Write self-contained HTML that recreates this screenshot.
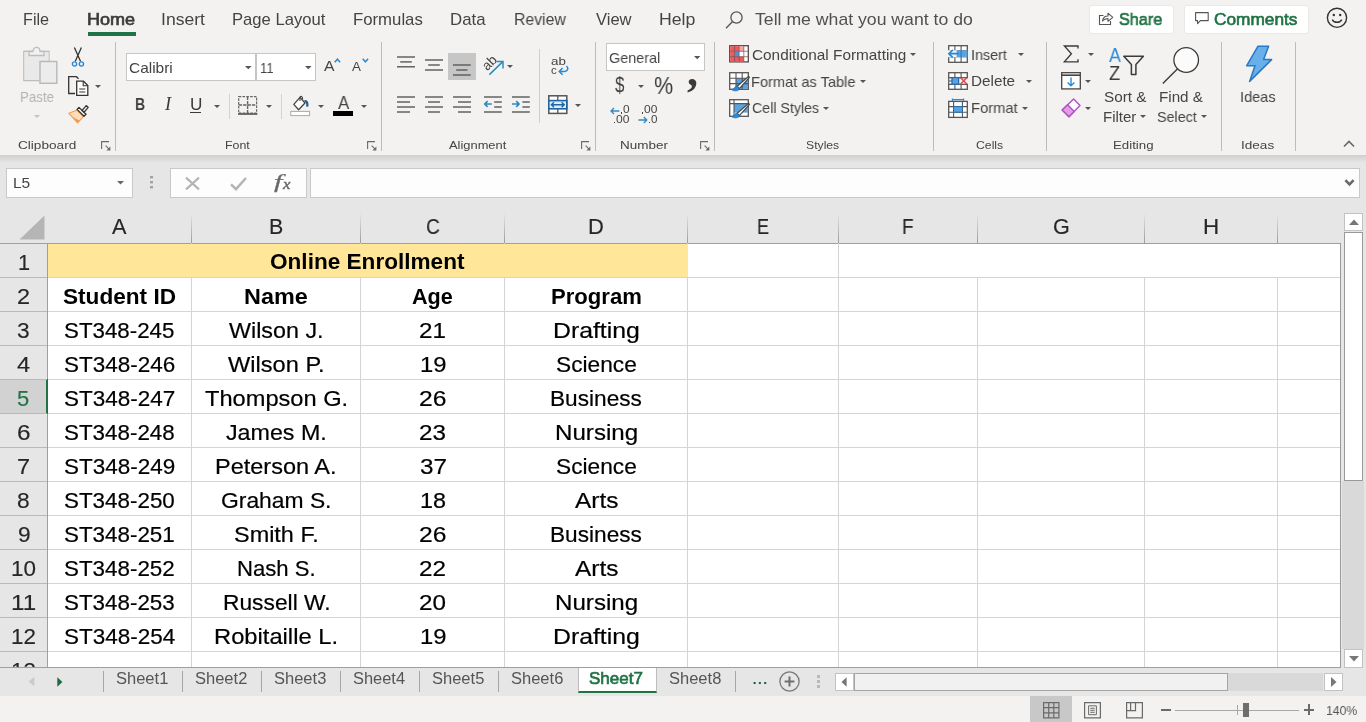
<!DOCTYPE html>
<html lang="en"><head><meta charset="utf-8"><title>Excel - Online Enrollment</title><style>
html,body{margin:0;padding:0}
body{width:1366px;height:722px;overflow:hidden;position:relative;background:#f3f2f1;font-family:"Liberation Sans",sans-serif}
div,svg,span.t{position:absolute;box-sizing:border-box}
span.t{white-space:nowrap;transform-origin:0 0;display:block;will-change:transform}
svg{overflow:visible}
</style></head>
<body>
<span class="t" style="left:23.23px;top:11.03px;font-size:16.2px;line-height:16.2px;color:#444;transform:scaleX(1.0008);">File</span>
<span class="t" style="left:87.19px;top:11.03px;font-size:16.2px;line-height:16.2px;color:#3a3a3a;-webkit-text-stroke:0.65px #3a3a3a;transform:scaleX(1.1140);">Home</span>
<div style="left:88px;top:32px;width:48px;height:4px;background:#217346"></div>
<span class="t" style="left:160.83px;top:11.03px;font-size:16.2px;line-height:16.2px;color:#444;transform:scaleX(1.0864);">Insert</span>
<span class="t" style="left:231.90px;top:11.03px;font-size:16.2px;line-height:16.2px;color:#444;transform:scaleX(1.0271);">Page Layout</span>
<span class="t" style="left:353.19px;top:11.03px;font-size:16.2px;line-height:16.2px;color:#444;transform:scaleX(1.0344);">Formulas</span>
<span class="t" style="left:449.89px;top:11.03px;font-size:16.2px;line-height:16.2px;color:#444;transform:scaleX(1.0376);">Data</span>
<span class="t" style="left:514.27px;top:11.03px;font-size:16.2px;line-height:16.2px;color:#444;transform:scaleX(0.9741);">Review</span>
<span class="t" style="left:596.20px;top:11.03px;font-size:16.2px;line-height:16.2px;color:#444;transform:scaleX(1.0223);">View</span>
<span class="t" style="left:658.82px;top:11.03px;font-size:16.2px;line-height:16.2px;color:#444;transform:scaleX(1.0925);">Help</span>
<span class="t" style="left:755.32px;top:11.03px;font-size:16.2px;line-height:16.2px;color:#505050;transform:scaleX(1.0905);">Tell me what you want to do</span>
<svg style="left:725px;top:10px" width="19" height="19" viewBox="0 0 19 19"><circle cx="11.5" cy="7.5" r="5.6" fill="none" stroke="#555" stroke-width="1.3"/><path d="M7.6 11.6L1 18.2" stroke="#555" stroke-width="1.4" fill="none"/></svg>
<div style="left:1089px;top:4.5px;width:84.5px;height:29px;background:#fff;border:1px solid #e9e8e6;border-radius:3px"></div>
<div style="left:1184px;top:4.5px;width:124.5px;height:29px;background:#fff;border:1px solid #e9e8e6;border-radius:3px"></div>
<span class="t" style="left:1118.69px;top:11.05px;font-size:17px;line-height:17px;color:#217346;-webkit-text-stroke:0.65px #217346;transform:scaleX(0.9537);">Share</span>
<span class="t" style="left:1213.89px;top:11.05px;font-size:17px;line-height:17px;color:#217346;-webkit-text-stroke:0.65px #217346;transform:scaleX(1.0154);">Comments</span>
<svg style="left:1098px;top:10px" width="16" height="16" viewBox="0 0 16 16"><path d="M5.5 5.5H1.5V14.5H12.5V11" fill="none" stroke="#555" stroke-width="1.1"/><path d="M4.5 11C5 7.5 7.5 6 10 6V3.2L14.8 7.3L10 11.3V8.6C8 8.6 6 9 4.5 11Z" fill="none" stroke="#555" stroke-width="1.1" stroke-linejoin="round"/></svg>
<svg style="left:1194.5px;top:12px" width="14" height="13" viewBox="0 0 14 13"><path d="M0.6 0.6H13.2V8.6H5.4L2.6 11.6V8.6H0.6Z" fill="none" stroke="#555" stroke-width="1.1" stroke-linejoin="round"/></svg>
<svg style="left:1326px;top:7px" width="22" height="22" viewBox="0 0 22 22"><circle cx="11" cy="10.8" r="9.6" fill="none" stroke="#333" stroke-width="1.4"/><circle cx="7.8" cy="8" r="1.2" fill="#333"/><circle cx="14.2" cy="8" r="1.2" fill="#333"/><path d="M6.2 12.6C8 16.2 14 16.2 15.8 12.6" fill="none" stroke="#333" stroke-width="1.4"/></svg>
<div style="left:115px;top:42px;width:1px;height:109px;background:#bebcba"></div>
<div style="left:381px;top:42px;width:1px;height:109px;background:#bebcba"></div>
<div style="left:595px;top:42px;width:1px;height:109px;background:#bebcba"></div>
<div style="left:714px;top:42px;width:1px;height:109px;background:#bebcba"></div>
<div style="left:933px;top:42px;width:1px;height:109px;background:#bebcba"></div>
<div style="left:1046px;top:42px;width:1px;height:109px;background:#bebcba"></div>
<div style="left:1221px;top:42px;width:1px;height:109px;background:#bebcba"></div>
<div style="left:1295px;top:42px;width:1px;height:109px;background:#bebcba"></div>
<div style="left:539px;top:49px;width:1px;height:74px;background:#d0cecc"></div>
<div style="left:229px;top:93.5px;width:1px;height:25.0px;background:#d4d2d0"></div>
<div style="left:281px;top:93.5px;width:1px;height:25.0px;background:#d4d2d0"></div>
<svg style="left:1343px;top:140px" width="12" height="8" viewBox="0 0 12 8"><path d="M1 6.5L6 1.5L11 6.5" fill="none" stroke="#666" stroke-width="1.6"/></svg>
<span class="t" style="left:17.87px;top:140.27px;font-size:11.8px;line-height:11.8px;color:#444;transform:scaleX(1.1534);">Clipboard</span>
<span class="t" style="left:225.30px;top:140.27px;font-size:11.8px;line-height:11.8px;color:#444;transform:scaleX(1.0495);">Font</span>
<span class="t" style="left:449.30px;top:140.27px;font-size:11.8px;line-height:11.8px;color:#444;transform:scaleX(1.0917);">Alignment</span>
<span class="t" style="left:620.21px;top:140.27px;font-size:11.8px;line-height:11.8px;color:#444;transform:scaleX(1.1435);">Number</span>
<span class="t" style="left:806.48px;top:140.27px;font-size:11.8px;line-height:11.8px;color:#444;transform:scaleX(1.0342);">Styles</span>
<span class="t" style="left:975.73px;top:140.27px;font-size:11.8px;line-height:11.8px;color:#444;transform:scaleX(1.0365);">Cells</span>
<span class="t" style="left:1113.23px;top:140.27px;font-size:11.8px;line-height:11.8px;color:#444;transform:scaleX(1.1244);">Editing</span>
<span class="t" style="left:1241.29px;top:140.27px;font-size:11.8px;line-height:11.8px;color:#444;transform:scaleX(1.1490);">Ideas</span>
<svg style="left:100.5px;top:140.6px" width="10" height="10" viewBox="0 0 10 10"><path d="M0.6 8V0.6H8" fill="none" stroke="#6a6a6a" stroke-width="1.1"/><path d="M4.6 4.6L8.4 8.4" fill="none" stroke="#6a6a6a" stroke-width="1.1"/><path d="M9.4 5.4V9.4H5.4Z" fill="#6a6a6a"/></svg>
<svg style="left:366.5px;top:140.6px" width="10" height="10" viewBox="0 0 10 10"><path d="M0.6 8V0.6H8" fill="none" stroke="#6a6a6a" stroke-width="1.1"/><path d="M4.6 4.6L8.4 8.4" fill="none" stroke="#6a6a6a" stroke-width="1.1"/><path d="M9.4 5.4V9.4H5.4Z" fill="#6a6a6a"/></svg>
<svg style="left:581px;top:140.6px" width="10" height="10" viewBox="0 0 10 10"><path d="M0.6 8V0.6H8" fill="none" stroke="#6a6a6a" stroke-width="1.1"/><path d="M4.6 4.6L8.4 8.4" fill="none" stroke="#6a6a6a" stroke-width="1.1"/><path d="M9.4 5.4V9.4H5.4Z" fill="#6a6a6a"/></svg>
<svg style="left:699.5px;top:140.6px" width="10" height="10" viewBox="0 0 10 10"><path d="M0.6 8V0.6H8" fill="none" stroke="#6a6a6a" stroke-width="1.1"/><path d="M4.6 4.6L8.4 8.4" fill="none" stroke="#6a6a6a" stroke-width="1.1"/><path d="M9.4 5.4V9.4H5.4Z" fill="#6a6a6a"/></svg>
<div style="left:0px;top:155px;width:1366px;height:541.5px;background:#e6e6e6"></div>
<div style="left:0px;top:155px;width:1366px;height:8px;background:linear-gradient(#d0cfce,#dad9d9 40%,#e6e6e6)"></div>
<svg style="left:23px;top:46px" width="35" height="39" viewBox="0 0 35 39"><path d="M8.5 5.5H0.8V34.5H16.5" fill="#e9e9e9" stroke="#bdbdbd" stroke-width="1.3"/><path d="M0.8 5.5H26V16" fill="#e9e9e9" stroke="#bdbdbd" stroke-width="1.3"/><rect x="1.5" y="6" width="24" height="28" fill="#e9e9e9"/><path d="M6 9.5V5.5H10C10 0 17 0 17 5.5H21V9.5Z" fill="#f3f2f1" stroke="#bdbdbd" stroke-width="1.3"/><rect x="17" y="15.5" width="16.8" height="21.8" fill="#ececec" stroke="#b7b7b7" stroke-width="1.4"/></svg>
<span class="t" style="left:20.16px;top:89.05px;font-size:15px;line-height:15px;color:#b3b3b3;transform:scaleX(0.8858);">Paste</span>
<svg style="left:34.0px;top:114.8px" width="6" height="3" viewBox="0 0 6 3"><path d="M0 0H6L3.0 3Z" fill="#c2c2c2"/></svg>
<svg style="left:71px;top:47px" width="14" height="21" viewBox="0 0 14 21"><path d="M3.4 0.4L9.6 14.6M10.4 0.4L4.2 14.6" stroke="#333" stroke-width="1.3" fill="none"/><circle cx="3.5" cy="17" r="2.1" fill="none" stroke="#2b88d8" stroke-width="1.4"/><circle cx="10.4" cy="17" r="2.1" fill="none" stroke="#2b88d8" stroke-width="1.4"/></svg>
<svg style="left:68px;top:76px" width="21" height="20" viewBox="0 0 21 20"><path d="M7 17.5H0.7V0.7H8.5L10.5 2.7" fill="none" stroke="#333" stroke-width="1.3"/><path d="M8.7 5.2H15.5L19.8 9.5V19.3H8.7Z" fill="#fff" stroke="#333" stroke-width="1.3"/><path d="M15.2 5.4V9.8H19.6" fill="none" stroke="#333" stroke-width="1.1"/><path d="M11.2 13H17.3M11.2 16H17.3" stroke="#333" stroke-width="1.2"/></svg>
<svg style="left:95.2px;top:85.2px" width="6" height="3" viewBox="0 0 6 3"><path d="M0 0H6L3.0 3Z" fill="#555"/></svg>
<svg style="left:68px;top:104px" width="21" height="20" viewBox="0 0 21 20"><path d="M0.9 9.3L8.6 6.2L15.4 12.6L9.6 18.8Z" fill="#fbdcbc" stroke="#f0a250" stroke-width="1.1" stroke-linejoin="round"/><path d="M0.9 9.3L4.4 12.9L11.6 16.6L9.6 18.8Z" fill="#f29a45"/><path d="M9 5.4L11 3.4L18 10.2L16 12.2Z" fill="#f3f2f1" stroke="#333" stroke-width="1.3" stroke-linejoin="round"/><path d="M14.2 6.4L18.2 1.6L20.2 3.4L16.2 8.2Z" fill="#f3f2f1" stroke="#333" stroke-width="1.3" stroke-linejoin="round"/></svg>
<div style="left:126px;top:53px;width:130px;height:28px;background:#fff;border:1px solid #c6c6c6"></div>
<div style="left:255.5px;top:53px;width:60.5px;height:28px;background:#fff;border:1px solid #c6c6c6"></div>
<span class="t" style="left:128.88px;top:59.85px;font-size:15px;line-height:15px;color:#444;transform:scaleX(1.0290);">Calibri</span>
<svg style="left:244.7px;top:66.05px" width="6.6" height="3.3" viewBox="0 0 6.6 3.3"><path d="M0 0H6.6L3.3 3.3Z" fill="#555"/></svg>
<span class="t" style="left:260.18px;top:59.85px;font-size:15px;line-height:15px;color:#444;transform:scaleX(0.8698);">11</span>
<svg style="left:304.5px;top:66.05px" width="6.6" height="3.3" viewBox="0 0 6.6 3.3"><path d="M0 0H6.6L3.3 3.3Z" fill="#555"/></svg>
<span class="t" style="left:324.20px;top:57.88px;font-size:15.2px;line-height:15.2px;color:#444;transform:scaleX(1.0379);">A</span>
<svg style="left:334px;top:58px" width="7" height="5" viewBox="0 0 7 5"><path d="M0.7 4.2L3.4 1.2L6.1 4.2" fill="none" stroke="#2b88d8" stroke-width="1.5"/></svg>
<span class="t" style="left:352.30px;top:59.75px;font-size:13px;line-height:13px;color:#444;transform:scaleX(1.0304);">A</span>
<svg style="left:361.5px;top:58.3px" width="7" height="5" viewBox="0 0 7 5"><path d="M0.7 0.8L3.4 3.8L6.1 0.8" fill="none" stroke="#2b88d8" stroke-width="1.5"/></svg>
<span class="t" style="left:134.92px;top:96.15px;font-size:17px;line-height:17px;color:#3b3b3b;font-weight:700;transform:scaleX(0.8282);">B</span>
<span class="t" style="left:164.69px;top:95.30px;font-size:18px;line-height:18px;color:#3b3b3b;font-style:italic;font-family:'Liberation Serif', serif;transform:scaleX(1.0240);">I</span>
<span class="t" style="left:189.53px;top:96.60px;font-size:16px;line-height:16px;color:#3b3b3b;transform:scaleX(1.0737);">U</span>
<div style="left:190.2px;top:112.1px;width:11px;height:1.3px;background:#3b3b3b"></div>
<svg style="left:214.2px;top:104.9px" width="6" height="3" viewBox="0 0 6 3"><path d="M0 0H6L3.0 3Z" fill="#555"/></svg>
<svg style="left:238px;top:96px" width="20" height="19" viewBox="0 0 20 19"><path d="M0.7 0.7H18.6V17.2H0.7Z" fill="none" stroke="#666" stroke-width="1.2" stroke-dasharray="2.6 1.2"/><path d="M9.6 0.7V17.2M0.7 9H18.6" fill="none" stroke="#666" stroke-width="1.4" stroke-dasharray="3.4 1"/><path d="M0 18H19.4" stroke="#5a5a5a" stroke-width="1.7"/></svg>
<svg style="left:266.0px;top:104.9px" width="6" height="3" viewBox="0 0 6 3"><path d="M0 0H6L3.0 3Z" fill="#555"/></svg>
<svg style="left:290px;top:96px" width="21" height="20" viewBox="0 0 21 20"><path d="M3.8 8.4L10 1.4L15 7L8.6 13.8Z" fill="#fff" stroke="#444" stroke-width="1.3" stroke-linejoin="round"/><path d="M10 5V1.6C10.2 -0.4 13 0 12.6 3.4" fill="none" stroke="#444" stroke-width="1.1"/><path d="M14.6 5.2C16.8 4.6 17.8 7 17.2 10.6" fill="none" stroke="#24648f" stroke-width="2.3"/><rect x="0.8" y="15.4" width="18.8" height="4.2" fill="#fff" stroke="#a9a9a9" stroke-width="1"/></svg>
<svg style="left:317.8px;top:104.9px" width="6" height="3" viewBox="0 0 6 3"><path d="M0 0H6L3.0 3Z" fill="#555"/></svg>
<span class="t" style="left:337.60px;top:94.08px;font-size:18.5px;line-height:18.5px;color:#444;transform:scaleX(0.9172);">A</span>
<div style="left:333px;top:111.2px;width:20.2px;height:4.7px;background:#000"></div>
<svg style="left:361.2px;top:104.9px" width="6" height="3" viewBox="0 0 6 3"><path d="M0 0H6L3.0 3Z" fill="#555"/></svg>
<div style="left:448px;top:53px;width:27.7px;height:26.6px;background:#c6c6c6"></div>
<svg style="left:397px;top:55.7px" width="20" height="11.799999999999997" viewBox="0 0 20 11.799999999999997"><rect x="0" y="0.30" width="18" height="1.4" fill="#595959"/><rect x="3.2" y="5.20" width="11.600000000000001" height="1.4" fill="#595959"/><rect x="0" y="10.10" width="18" height="1.4" fill="#595959"/></svg>
<svg style="left:425.2px;top:59.3px" width="20" height="12.0" viewBox="0 0 20 12.0"><rect x="0" y="0.30" width="18" height="1.4" fill="#595959"/><rect x="3.2" y="5.30" width="11.600000000000001" height="1.4" fill="#595959"/><rect x="0" y="10.30" width="18" height="1.4" fill="#595959"/></svg>
<svg style="left:453.2px;top:64.2px" width="20" height="12.0" viewBox="0 0 20 12.0"><rect x="0" y="0.30" width="17.7" height="1.4" fill="#595959"/><rect x="3.2" y="5.30" width="11.3" height="1.4" fill="#595959"/><rect x="0" y="10.30" width="17.7" height="1.4" fill="#595959"/></svg>
<svg style="left:397px;top:95.9px" width="20" height="17.0" viewBox="0 0 20 17.0"><rect x="0" y="0.30" width="18" height="1.4" fill="#595959"/><rect x="0" y="5.30" width="13" height="1.4" fill="#595959"/><rect x="0" y="10.30" width="18" height="1.4" fill="#595959"/><rect x="0" y="15.30" width="13" height="1.4" fill="#595959"/></svg>
<svg style="left:425.2px;top:95.9px" width="20" height="17.0" viewBox="0 0 20 17.0"><rect x="0" y="0.30" width="18" height="1.4" fill="#595959"/><rect x="3" y="5.30" width="12" height="1.4" fill="#595959"/><rect x="0" y="10.30" width="18" height="1.4" fill="#595959"/><rect x="3" y="15.30" width="12" height="1.4" fill="#595959"/></svg>
<svg style="left:453px;top:95.9px" width="20" height="17.0" viewBox="0 0 20 17.0"><rect x="0" y="0.30" width="18" height="1.4" fill="#595959"/><rect x="5" y="5.30" width="13" height="1.4" fill="#595959"/><rect x="0" y="10.30" width="18" height="1.4" fill="#595959"/><rect x="5" y="15.30" width="13" height="1.4" fill="#595959"/></svg>
<svg style="left:484px;top:95.9px" width="20" height="17.0" viewBox="0 0 20 17.0"><rect x="0" y="0.30" width="17.8" height="1.4" fill="#595959"/><rect x="10.2" y="5.30" width="7.600000000000001" height="1.4" fill="#595959"/><rect x="10.2" y="10.30" width="7.600000000000001" height="1.4" fill="#595959"/><rect x="0" y="15.30" width="17.8" height="1.4" fill="#595959"/></svg>
<svg style="left:512.2px;top:95.9px" width="20" height="17.0" viewBox="0 0 20 17.0"><rect x="0" y="0.30" width="17.8" height="1.4" fill="#595959"/><rect x="10.4" y="5.30" width="7.4" height="1.4" fill="#595959"/><rect x="10.4" y="10.30" width="7.4" height="1.4" fill="#595959"/><rect x="0" y="15.30" width="17.8" height="1.4" fill="#595959"/></svg>
<svg style="left:484px;top:100.4px" width="8" height="8" viewBox="0 0 8 8"><path d="M7.8 4H0.8M3.6 1.2L0.8 4L3.6 6.8" fill="none" stroke="#2e8bc0" stroke-width="1.7"/></svg>
<svg style="left:512.2px;top:100.4px" width="8" height="8" viewBox="0 0 8 8"><path d="M0 4H7M4.2 1.2L7 4L4.2 6.8" fill="none" stroke="#2e8bc0" stroke-width="1.7"/></svg>
<svg style="left:480px;top:54px" width="26" height="23" viewBox="0 0 26 23"><text x="9.6" y="13.2" font-size="13.5" font-family="Liberation Sans, sans-serif" fill="#444" text-anchor="middle" transform="rotate(-45 9.6 9)">ab</text><path d="M9.4 20.6L22.8 7.6M16.2 7.4H23V14.4" fill="none" stroke="#2e8bc0" stroke-width="1.5"/></svg>
<svg style="left:507.2px;top:65.0px" width="6" height="3" viewBox="0 0 6 3"><path d="M0 0H6L3.0 3Z" fill="#555"/></svg>
<span class="t" style="left:550.85px;top:55.65px;font-size:11px;line-height:11px;color:#444;transform:scaleX(1.2140);">ab</span>
<span class="t" style="left:551.13px;top:64.85px;font-size:11px;line-height:11px;color:#444;transform:scaleX(1.0417);">c</span>
<svg style="left:557.5px;top:65px" width="11" height="11" viewBox="0 0 11 11"><path d="M8.6 1C10.6 3.4 10 6.4 6.4 6.4H1.4M4.6 3L1.2 6.4L4.6 9.8" fill="none" stroke="#2b88d8" stroke-width="1.5"/></svg>
<svg style="left:548px;top:95px" width="20" height="19.5" viewBox="0 0 20 19.5"><rect x="0.8" y="0.8" width="18" height="17.6" fill="#fff" stroke="#555" stroke-width="1.5"/><path d="M9.8 0.8V5.4M9.8 14V18.4" stroke="#555" stroke-width="1.3"/><rect x="0.8" y="5.6" width="18" height="8.2" fill="#d9ecfa" stroke="#1f64a0" stroke-width="1.6"/><path d="M3.4 9.7H16.2M6 7.2L3.4 9.7L6 12.2M13.6 7.2L16.2 9.7L13.6 12.2" fill="none" stroke="#1f64a0" stroke-width="1.4"/></svg>
<svg style="left:574.8px;top:104.1px" width="6" height="3" viewBox="0 0 6 3"><path d="M0 0H6L3.0 3Z" fill="#555"/></svg>
<div style="left:606.2px;top:43.3px;width:98.5px;height:27.3px;background:#fff;border:1px solid #c6c6c6"></div>
<span class="t" style="left:608.93px;top:49.95px;font-size:15px;line-height:15px;color:#444;transform:scaleX(0.9599);">General</span>
<svg style="left:693.9px;top:56.1px" width="6.4" height="3.2" viewBox="0 0 6.4 3.2"><path d="M0 0H6.4L3.2 3.2Z" fill="#555"/></svg>
<span class="t" style="left:615.00px;top:74.28px;font-size:22.5px;line-height:22.5px;color:#3b3b3b;transform:scaleX(0.7558);">$</span>
<svg style="left:638.0px;top:84.9px" width="6" height="3" viewBox="0 0 6 3"><path d="M0 0H6L3.0 3Z" fill="#555"/></svg>
<span class="t" style="left:653.53px;top:74.00px;font-size:24px;line-height:24px;color:#3b3b3b;transform:scaleX(0.8956);">%</span>
<span class="t" style="left:686.80px;top:49.80px;font-size:44px;line-height:44px;color:#3b3b3b;font-weight:700;font-family:'Liberation Serif', serif;transform:scaleX(0.9974);">,</span>
<svg style="left:610px;top:106.5px" width="10" height="8" viewBox="0 0 10 8"><path d="M9.4 4H1M4 1L1 4L4 7" fill="none" stroke="#2e8bc0" stroke-width="1.3"/></svg>
<span class="t" style="left:622.89px;top:103.82px;font-size:11.5px;line-height:11.5px;color:#444;transform:scaleX(1.0270);">0</span>
<div style="left:620.6px;top:112.3px;width:1.3px;height:1.3px;background:#444"></div>
<span class="t" style="left:616.08px;top:113.52px;font-size:11.5px;line-height:11.5px;color:#444;transform:scaleX(1.0464);">00</span>
<div style="left:613.6px;top:122px;width:1.3px;height:1.3px;background:#444"></div>
<span class="t" style="left:644.18px;top:103.82px;font-size:11.5px;line-height:11.5px;color:#444;transform:scaleX(1.0380);">00</span>
<div style="left:641.6px;top:112.3px;width:1.3px;height:1.3px;background:#444"></div>
<svg style="left:638.2px;top:116px" width="10" height="8" viewBox="0 0 10 8"><path d="M0.4 4H8.8M5.8 1L8.8 4L5.8 7" fill="none" stroke="#2e8bc0" stroke-width="1.3"/></svg>
<span class="t" style="left:651.00px;top:113.52px;font-size:11.5px;line-height:11.5px;color:#444;transform:scaleX(1.0090);">0</span>
<div style="left:648.8px;top:122px;width:1.3px;height:1.3px;background:#444"></div>
<svg style="left:729px;top:45px" width="20" height="18" viewBox="0 0 20 18"><rect x="0.7" y="0.7" width="18.6" height="16.2" fill="#fff" stroke="#5a4a4a" stroke-width="1.3"/><rect x="1.2" y="1.2" width="9" height="5.2" fill="#f0585c"/><rect x="10.2" y="1.2" width="4.6" height="5.2" fill="#f7a6a8"/><rect x="1.2" y="6.4" width="4.4" height="5.4" fill="#f0585c"/><rect x="5.6" y="6.4" width="4.4" height="5.4" fill="#4f93d2"/><rect x="1.2" y="11.6" width="13.6" height="5" fill="#f0585c"/><path d="M5.6 1V16.6M10.2 1V16.6M14.8 1V16.6M1 6.3H19M1 11.7H19" stroke="#6e4a4a" stroke-width="0.9" opacity="0.75"/></svg>
<span class="t" style="left:751.88px;top:47.05px;font-size:15px;line-height:15px;color:#444;transform:scaleX(1.0230);">Conditional Formatting</span>
<svg style="left:909.9px;top:53.1px" width="6" height="3" viewBox="0 0 6 3"><path d="M0 0H6L3.0 3Z" fill="#555"/></svg>
<svg style="left:729px;top:72px" width="21" height="20" viewBox="0 0 21 20"><rect x="0.7" y="0.7" width="18.6" height="16.6" fill="#fff" stroke="#555" stroke-width="1.3"/><rect x="7" y="6.2" width="12" height="10.6" fill="#5ba3e0"/><path d="M7 1V17M13.2 1V17M1 6.2H19M1 11.6H19" stroke="#555" stroke-width="1.1"/><path d="M19.6 4.4L8.2 14.2L10.4 16.6L20.4 5.4Z" fill="#fff" stroke="#444" stroke-width="1.2" stroke-linejoin="round"/><path d="M8.2 14.2C5.6 13.8 5.4 17.4 2.6 17.6C5.2 19.4 9.8 19.4 10.4 16.6Z" fill="#2b88d8" stroke="#1f6fb5" stroke-width="0.8"/></svg>
<span class="t" style="left:751.46px;top:73.85px;font-size:15px;line-height:15px;color:#444;transform:scaleX(0.9739);">Format as Table</span>
<svg style="left:860.0px;top:79.9px" width="6" height="3" viewBox="0 0 6 3"><path d="M0 0H6L3.0 3Z" fill="#555"/></svg>
<svg style="left:729px;top:99px" width="21" height="20" viewBox="0 0 21 20"><rect x="0.7" y="0.7" width="18.6" height="16.6" fill="#fff" stroke="#555" stroke-width="1.3"/><rect x="5" y="4.6" width="14" height="9" fill="#5ba3e0"/><path d="M5 1V17M1 4.6H19" stroke="#555" stroke-width="1.1"/><path d="M19.6 4.4L8.2 14.2L10.4 16.6L20.4 5.4Z" fill="#fff" stroke="#444" stroke-width="1.2" stroke-linejoin="round"/><path d="M8.2 14.2C5.6 13.8 5.4 17.4 2.6 17.6C5.2 19.4 9.8 19.4 10.4 16.6Z" fill="#2b88d8" stroke="#1f6fb5" stroke-width="0.8"/></svg>
<span class="t" style="left:751.93px;top:100.45px;font-size:15px;line-height:15px;color:#444;transform:scaleX(0.9472);">Cell Styles</span>
<svg style="left:822.9px;top:106.7px" width="6" height="3" viewBox="0 0 6 3"><path d="M0 0H6L3.0 3Z" fill="#555"/></svg>
<svg style="left:948px;top:45px" width="20" height="18" viewBox="0 0 20 18"><rect x="0.7" y="0.7" width="18.6" height="16.6" fill="#fff" stroke="#555" stroke-width="1.3"/><path d="M0.7 5.8H19.3M0.7 11.6H19.3M6.9 0.7V17.3M13.1 0.7V17.3" stroke="#555" stroke-width="1.1"/><rect x="0" y="5.2" width="9" height="7" fill="#f3f2f1"/><rect x="8.6" y="5.2" width="10.8" height="7" fill="#5ba3e0"/><path d="M13.1 5.2V12.2" stroke="#2a6ca8" stroke-width="0.9"/><path d="M11 8.7H1M4.8 4.8L0.9 8.7L4.8 12.6" fill="none" stroke="#2b88d8" stroke-width="1.7"/></svg>
<span class="t" style="left:970.88px;top:46.65px;font-size:15px;line-height:15px;color:#444;transform:scaleX(0.9562);">Insert</span>
<svg style="left:1018.2px;top:53.0px" width="6" height="3" viewBox="0 0 6 3"><path d="M0 0H6L3.0 3Z" fill="#555"/></svg>
<svg style="left:948px;top:72px" width="20" height="18" viewBox="0 0 20 18"><rect x="0.7" y="0.7" width="18.6" height="5" fill="#fff" stroke="#555" stroke-width="1.3"/><rect x="0.7" y="12.3" width="18.6" height="5" fill="#fff" stroke="#555" stroke-width="1.3"/><path d="M6.9 0.7V5.7M13.1 0.7V5.7M6.9 12.3V17.3M13.1 12.3V17.3M0.7 5.7V12.3" stroke="#555" stroke-width="1.1"/><path d="M0.7 9H4" stroke="#2a6ca8" stroke-width="1.1"/><rect x="4" y="5.6" width="6.6" height="6.6" fill="#5ba3e0" stroke="#2a6ca8" stroke-width="1.3"/><path d="M12.6 5.8L18.8 12M18.8 5.8L12.6 12" stroke="#e8484c" stroke-width="1.5"/></svg>
<span class="t" style="left:970.81px;top:73.45px;font-size:15px;line-height:15px;color:#444;transform:scaleX(1.0173);">Delete</span>
<svg style="left:1026.1px;top:79.8px" width="6" height="3" viewBox="0 0 6 3"><path d="M0 0H6L3.0 3Z" fill="#555"/></svg>
<svg style="left:948px;top:98px" width="20" height="20" viewBox="0 0 20 20"><rect x="0.7" y="3.4" width="18.6" height="16" fill="#fff" stroke="#555" stroke-width="1.3"/><path d="M0.7 8.6H19.3M0.7 14.2H19.3M5.6 3.4V19.4M14.4 3.4V19.4" stroke="#555" stroke-width="1.1"/><rect x="5.6" y="8.6" width="8.8" height="5.6" fill="#5ba3e0" stroke="#2a6ca8" stroke-width="1"/><path d="M4.4 0.4V3M15.6 0.4V3M4.4 1.6H15.6" stroke="#2b88d8" stroke-width="1.1" fill="none"/></svg>
<span class="t" style="left:970.85px;top:100.25px;font-size:15px;line-height:15px;color:#444;transform:scaleX(0.9831);">Format</span>
<svg style="left:1022.0999999999999px;top:106.6px" width="6" height="3" viewBox="0 0 6 3"><path d="M0 0H6L3.0 3Z" fill="#555"/></svg>
<svg style="left:1063px;top:45px" width="17" height="18" viewBox="0 0 17 18"><path d="M15 3.6V1H1.4L8.4 8.8L1.4 16.8H15V14.2" fill="none" stroke="#3b3b3b" stroke-width="1.35"/></svg>
<svg style="left:1088.0px;top:53.0px" width="6" height="3" viewBox="0 0 6 3"><path d="M0 0H6L3.0 3Z" fill="#555"/></svg>
<svg style="left:1061px;top:72px" width="20" height="18" viewBox="0 0 20 18"><rect x="0.7" y="0.7" width="18.6" height="16.2" fill="#fff" stroke="#444" stroke-width="1.3"/><path d="M0.7 3.2H19.3" stroke="#444" stroke-width="1.6"/><path d="M10 5.6V13.6M6.6 10.4L10 13.8L13.4 10.4" fill="none" stroke="#2b88d8" stroke-width="1.4"/></svg>
<svg style="left:1085.0px;top:79.8px" width="6" height="3" viewBox="0 0 6 3"><path d="M0 0H6L3.0 3Z" fill="#555"/></svg>
<svg style="left:1061px;top:98px" width="20" height="20" viewBox="0 0 20 20"><path d="M12.6 1L19 7.6L8 18.8L1.2 12Z" fill="#fff" stroke="#b14fc5" stroke-width="1.4" stroke-linejoin="round"/><path d="M6.6 6.8L13.2 13.4L8 18.8L1.2 12Z" fill="#e59be8" stroke="#b14fc5" stroke-width="1.4" stroke-linejoin="round"/></svg>
<svg style="left:1085.0px;top:106.6px" width="6" height="3" viewBox="0 0 6 3"><path d="M0 0H6L3.0 3Z" fill="#555"/></svg>
<span class="t" style="left:1108.60px;top:44.78px;font-size:20.5px;line-height:20.5px;color:#2e8bd8;transform:scaleX(0.8712);">A</span>
<span class="t" style="left:1108.83px;top:62.60px;font-size:20px;line-height:20px;color:#3b3b3b;transform:scaleX(0.9156);">Z</span>
<svg style="left:1123px;top:54.6px" width="22" height="22" viewBox="0 0 22 22"><path d="M0.8 1.2H20.4L12.9 9.6V19.6H8.4V9.6Z" fill="none" stroke="#3b3b3b" stroke-width="1.5" stroke-linejoin="round"/></svg>
<span class="t" style="left:1103.92px;top:88.85px;font-size:15px;line-height:15px;color:#444;transform:scaleX(1.0182);">Sort &amp;</span>
<span class="t" style="left:1103.24px;top:108.85px;font-size:15px;line-height:15px;color:#444;transform:scaleX(0.9910);">Filter</span>
<svg style="left:1140.2px;top:114.9px" width="6" height="3" viewBox="0 0 6 3"><path d="M0 0H6L3.0 3Z" fill="#555"/></svg>
<svg style="left:1162.4px;top:46.6px" width="38" height="38" viewBox="0 0 38 38"><circle cx="24.2" cy="13" r="12.3" fill="#fbfbfb" stroke="#3b3b3b" stroke-width="1.3"/><path d="M15.6 21.8L0.8 36.4" stroke="#3b3b3b" stroke-width="1.4"/></svg>
<span class="t" style="left:1159.21px;top:88.85px;font-size:15px;line-height:15px;color:#444;transform:scaleX(1.0138);">Find &amp;</span>
<span class="t" style="left:1156.95px;top:108.85px;font-size:15px;line-height:15px;color:#444;transform:scaleX(0.9546);">Select</span>
<svg style="left:1201.4px;top:114.9px" width="6" height="3" viewBox="0 0 6 3"><path d="M0 0H6L3.0 3Z" fill="#555"/></svg>
<svg style="left:1245px;top:45px" width="29" height="38" viewBox="0 0 29 38"><path d="M13 1.2H23.6L18.6 14.6H26.6L4.6 36.4L10 20.8H1.6Z" fill="#69afe9" stroke="#2878c8" stroke-width="1.5" stroke-linejoin="round"/></svg>
<span class="t" style="left:1240.46px;top:88.95px;font-size:15px;line-height:15px;color:#444;transform:scaleX(0.9699);">Ideas</span>
<div style="left:6px;top:168px;width:126.5px;height:29.5px;background:#fdfdfd;border:1px solid #c9c9c9"></div>
<span class="t" style="left:13.02px;top:175.42px;font-size:15.5px;line-height:15.5px;color:#444;transform:scaleX(0.9739);">L5</span>
<svg style="left:117.0px;top:180.95px" width="7" height="3.5" viewBox="0 0 7 3.5"><path d="M0 0H7L3.5 3.5Z" fill="#666"/></svg>
<svg style="left:150.2px;top:176.4px" width="3" height="2.5" viewBox="0 0 3 2.5"><rect width="3" height="2.4" fill="#a3a3a3"/></svg>
<svg style="left:150.2px;top:181.3px" width="3" height="2.5" viewBox="0 0 3 2.5"><rect width="3" height="2.4" fill="#a3a3a3"/></svg>
<svg style="left:150.2px;top:186.2px" width="3" height="2.5" viewBox="0 0 3 2.5"><rect width="3" height="2.4" fill="#a3a3a3"/></svg>
<div style="left:170px;top:168px;width:137px;height:29.5px;background:#fdfdfd;border:1px solid #c9c9c9"></div>
<svg style="left:185px;top:177px" width="15" height="13" viewBox="0 0 15 13"><path d="M1 0.6L14 12.4M14 0.6L1 12.4" stroke="#b4b4b4" stroke-width="2.1" fill="none"/></svg>
<svg style="left:229.5px;top:177px" width="17" height="13" viewBox="0 0 17 13"><path d="M1 7.4L6 12.2L16 1" stroke="#b4b4b4" stroke-width="2.5" fill="none"/></svg>
<span class="t" style="left:274.20px;top:171.83px;font-size:19.5px;line-height:19.5px;color:#686868;font-style:italic;font-family:'Liberation Serif', serif;-webkit-text-stroke:0.25px #686868;transform:scaleX(1.5400);">f</span>
<span class="t" style="left:282.86px;top:176.68px;font-size:14.5px;line-height:14.5px;color:#686868;font-style:italic;font-family:'Liberation Serif', serif;-webkit-text-stroke:0.4px #686868;transform:scaleX(1.1567);">x</span>
<div style="left:310px;top:168px;width:1049.5px;height:29.5px;background:#fdfdfd;border:1px solid #c9c9c9"></div>
<svg style="left:1343.5px;top:178.5px" width="11" height="8" viewBox="0 0 11 8"><path d="M1.4 1.2L5.5 5.4L9.6 1.2" fill="none" stroke="#6a6a6a" stroke-width="2.6"/></svg>
<div style="left:47px;top:243px;width:1293px;height:424px;background:#fff"></div>
<span class="t" style="left:112.31px;top:217.41px;font-size:21.4px;line-height:21.4px;color:#262626;-webkit-text-stroke:0.15px #262626;transform:scaleX(1.0133);">A</span>
<span class="t" style="left:269.44px;top:217.41px;font-size:21.4px;line-height:21.4px;color:#262626;-webkit-text-stroke:0.15px #262626;transform:scaleX(0.9757);">B</span>
<span class="t" style="left:426.03px;top:217.41px;font-size:21.4px;line-height:21.4px;color:#262626;-webkit-text-stroke:0.15px #262626;transform:scaleX(0.8904);">C</span>
<span class="t" style="left:588.46px;top:217.41px;font-size:21.4px;line-height:21.4px;color:#262626;-webkit-text-stroke:0.15px #262626;transform:scaleX(1.0266);">D</span>
<span class="t" style="left:757.37px;top:217.41px;font-size:21.4px;line-height:21.4px;color:#262626;-webkit-text-stroke:0.15px #262626;transform:scaleX(0.8411);">E</span>
<span class="t" style="left:902.41px;top:217.41px;font-size:21.4px;line-height:21.4px;color:#262626;-webkit-text-stroke:0.15px #262626;transform:scaleX(0.8832);">F</span>
<span class="t" style="left:1053.18px;top:217.41px;font-size:21.4px;line-height:21.4px;color:#262626;-webkit-text-stroke:0.15px #262626;transform:scaleX(1.0093);">G</span>
<span class="t" style="left:1203.32px;top:217.41px;font-size:21.4px;line-height:21.4px;color:#262626;-webkit-text-stroke:0.15px #262626;transform:scaleX(1.0467);">H</span>
<div style="left:191px;top:213px;width:1px;height:30px;background:linear-gradient(#e6e6e6,#9c9c9c)"></div>
<div style="left:360px;top:213px;width:1px;height:30px;background:linear-gradient(#e6e6e6,#9c9c9c)"></div>
<div style="left:504px;top:213px;width:1px;height:30px;background:linear-gradient(#e6e6e6,#9c9c9c)"></div>
<div style="left:687px;top:213px;width:1px;height:30px;background:linear-gradient(#e6e6e6,#9c9c9c)"></div>
<div style="left:838px;top:213px;width:1px;height:30px;background:linear-gradient(#e6e6e6,#9c9c9c)"></div>
<div style="left:977px;top:213px;width:1px;height:30px;background:linear-gradient(#e6e6e6,#9c9c9c)"></div>
<div style="left:1144px;top:213px;width:1px;height:30px;background:linear-gradient(#e6e6e6,#9c9c9c)"></div>
<div style="left:1277px;top:213px;width:1px;height:30px;background:linear-gradient(#e6e6e6,#9c9c9c)"></div>
<svg style="left:19px;top:215px" width="26" height="25" viewBox="0 0 26 25"><path d="M25.5 0.5V24.5H0.5Z" fill="#b5b5b5"/></svg>
<div style="left:0px;top:242.5px;width:1340.5px;height:1px;background:#9f9f9f"></div>
<div style="left:46.5px;top:243px;width:1px;height:424px;background:#9f9f9f"></div>
<div style="left:0px;top:379.5px;width:46px;height:33.5px;background:#d2d2d2"></div>
<div style="left:45.8px;top:379px;width:2px;height:34.5px;background:#217346"></div>
<span class="t" style="left:17.72px;top:252.51px;font-size:21.4px;line-height:21.4px;color:#262626;-webkit-text-stroke:0.15px #262626;transform:scaleX(1.0151);">1</span>
<span class="t" style="left:16.80px;top:286.51px;font-size:21.4px;line-height:21.4px;color:#262626;-webkit-text-stroke:0.15px #262626;transform:scaleX(1.0991);">2</span>
<div style="left:0px;top:276.5px;width:47px;height:1px;background:#b9b9b9"></div>
<span class="t" style="left:17.19px;top:320.51px;font-size:21.4px;line-height:21.4px;color:#262626;-webkit-text-stroke:0.15px #262626;transform:scaleX(1.0636);">3</span>
<div style="left:0px;top:310.5px;width:47px;height:1px;background:#b9b9b9"></div>
<span class="t" style="left:17.14px;top:354.51px;font-size:21.4px;line-height:21.4px;color:#262626;-webkit-text-stroke:0.15px #262626;transform:scaleX(1.1062);">4</span>
<div style="left:0px;top:344.5px;width:47px;height:1px;background:#b9b9b9"></div>
<span class="t" style="left:17.22px;top:388.51px;font-size:21.4px;line-height:21.4px;color:#217346;-webkit-text-stroke:0.15px #217346;transform:scaleX(1.0256);">5</span>
<div style="left:0px;top:378.5px;width:47px;height:1px;background:#b9b9b9"></div>
<span class="t" style="left:16.76px;top:422.51px;font-size:21.4px;line-height:21.4px;color:#262626;-webkit-text-stroke:0.15px #262626;transform:scaleX(1.1383);">6</span>
<div style="left:0px;top:412.5px;width:47px;height:1px;background:#b9b9b9"></div>
<span class="t" style="left:17.19px;top:456.51px;font-size:21.4px;line-height:21.4px;color:#262626;-webkit-text-stroke:0.15px #262626;transform:scaleX(1.0991);">7</span>
<div style="left:0px;top:446.5px;width:47px;height:1px;background:#b9b9b9"></div>
<span class="t" style="left:17.19px;top:490.51px;font-size:21.4px;line-height:21.4px;color:#262626;-webkit-text-stroke:0.15px #262626;transform:scaleX(1.0636);">8</span>
<div style="left:0px;top:480.5px;width:47px;height:1px;background:#b9b9b9"></div>
<span class="t" style="left:17.63px;top:524.51px;font-size:21.4px;line-height:21.4px;color:#262626;-webkit-text-stroke:0.15px #262626;transform:scaleX(1.0598);">9</span>
<div style="left:0px;top:514.5px;width:47px;height:1px;background:#b9b9b9"></div>
<span class="t" style="left:11.29px;top:558.51px;font-size:21.4px;line-height:21.4px;color:#262626;-webkit-text-stroke:0.15px #262626;transform:scaleX(1.0491);">10</span>
<div style="left:0px;top:548.5px;width:47px;height:1px;background:#b9b9b9"></div>
<span class="t" style="left:11.18px;top:592.51px;font-size:21.4px;line-height:21.4px;color:#262626;-webkit-text-stroke:0.15px #262626;transform:scaleX(1.1302);">11</span>
<div style="left:0px;top:582.5px;width:47px;height:1px;background:#b9b9b9"></div>
<span class="t" style="left:11.30px;top:626.51px;font-size:21.4px;line-height:21.4px;color:#262626;-webkit-text-stroke:0.15px #262626;transform:scaleX(1.0471);">12</span>
<div style="left:0px;top:616.5px;width:47px;height:1px;background:#b9b9b9"></div>
<span class="t" style="left:11.30px;top:660.51px;font-size:21.4px;line-height:21.4px;color:#262626;-webkit-text-stroke:0.15px #262626;transform:scaleX(1.0471);">13</span>
<div style="left:0px;top:650.5px;width:47px;height:1px;background:#b9b9b9"></div>
<div style="left:47.5px;top:276.5px;width:1292.5px;height:1px;background:#d4d4d4"></div>
<div style="left:47.5px;top:310.5px;width:1292.5px;height:1px;background:#d4d4d4"></div>
<div style="left:47.5px;top:344.5px;width:1292.5px;height:1px;background:#d4d4d4"></div>
<div style="left:47.5px;top:378.5px;width:1292.5px;height:1px;background:#d4d4d4"></div>
<div style="left:47.5px;top:412.5px;width:1292.5px;height:1px;background:#d4d4d4"></div>
<div style="left:47.5px;top:446.5px;width:1292.5px;height:1px;background:#d4d4d4"></div>
<div style="left:47.5px;top:480.5px;width:1292.5px;height:1px;background:#d4d4d4"></div>
<div style="left:47.5px;top:514.5px;width:1292.5px;height:1px;background:#d4d4d4"></div>
<div style="left:47.5px;top:548.5px;width:1292.5px;height:1px;background:#d4d4d4"></div>
<div style="left:47.5px;top:582.5px;width:1292.5px;height:1px;background:#d4d4d4"></div>
<div style="left:47.5px;top:616.5px;width:1292.5px;height:1px;background:#d4d4d4"></div>
<div style="left:47.5px;top:650.5px;width:1292.5px;height:1px;background:#d4d4d4"></div>
<div style="left:191px;top:243px;width:1px;height:424px;background:#d4d4d4"></div>
<div style="left:360px;top:243px;width:1px;height:424px;background:#d4d4d4"></div>
<div style="left:504px;top:243px;width:1px;height:424px;background:#d4d4d4"></div>
<div style="left:687px;top:243px;width:1px;height:424px;background:#d4d4d4"></div>
<div style="left:838px;top:243px;width:1px;height:424px;background:#d4d4d4"></div>
<div style="left:977px;top:277px;width:1px;height:390px;background:#d4d4d4"></div>
<div style="left:1144px;top:277px;width:1px;height:390px;background:#d4d4d4"></div>
<div style="left:1277px;top:277px;width:1px;height:390px;background:#d4d4d4"></div>
<div style="left:47.5px;top:243.5px;width:640px;height:33.5px;background:#ffe699"></div>
<span class="t" style="left:270.43px;top:252.31px;font-size:21.4px;line-height:21.4px;color:#000;font-weight:700;transform:scaleX(1.0558);">Online Enrollment</span>
<span class="t" style="left:63.20px;top:286.51px;font-size:21.4px;line-height:21.4px;color:#000;font-weight:700;transform:scaleX(1.0571);">Student ID</span>
<span class="t" style="left:244.36px;top:286.51px;font-size:21.4px;line-height:21.4px;color:#000;font-weight:700;transform:scaleX(1.0948);">Name</span>
<span class="t" style="left:412.30px;top:286.51px;font-size:21.4px;line-height:21.4px;color:#000;font-weight:700;transform:scaleX(1.0093);">Age</span>
<span class="t" style="left:550.84px;top:286.51px;font-size:21.4px;line-height:21.4px;color:#000;font-weight:700;transform:scaleX(1.0336);">Program</span>
<span class="t" style="left:64.00px;top:320.51px;font-size:21.4px;line-height:21.4px;color:#000;-webkit-text-stroke:0.2px #000;transform:scaleX(1.0429);">ST348-245</span>
<span class="t" style="left:229.26px;top:320.51px;font-size:21.4px;line-height:21.4px;color:#000;-webkit-text-stroke:0.2px #000;transform:scaleX(1.0896);">Wilson J.</span>
<span class="t" style="left:419.21px;top:320.51px;font-size:21.4px;line-height:21.4px;color:#000;-webkit-text-stroke:0.2px #000;transform:scaleX(1.1324);">21</span>
<span class="t" style="left:553.21px;top:320.51px;font-size:21.4px;line-height:21.4px;color:#000;-webkit-text-stroke:0.2px #000;transform:scaleX(1.1598);">Drafting</span>
<span class="t" style="left:64.00px;top:354.51px;font-size:21.4px;line-height:21.4px;color:#000;-webkit-text-stroke:0.2px #000;transform:scaleX(1.0506);">ST348-246</span>
<span class="t" style="left:228.22px;top:354.51px;font-size:21.4px;line-height:21.4px;color:#000;-webkit-text-stroke:0.2px #000;transform:scaleX(1.1035);">Wilson P.</span>
<span class="t" style="left:420.09px;top:354.51px;font-size:21.4px;line-height:21.4px;color:#000;-webkit-text-stroke:0.2px #000;transform:scaleX(1.1118);">19</span>
<span class="t" style="left:555.88px;top:354.51px;font-size:21.4px;line-height:21.4px;color:#000;-webkit-text-stroke:0.2px #000;transform:scaleX(1.0615);">Science</span>
<span class="t" style="left:64.00px;top:388.51px;font-size:21.4px;line-height:21.4px;color:#000;-webkit-text-stroke:0.2px #000;transform:scaleX(1.0506);">ST348-247</span>
<span class="t" style="left:204.81px;top:388.51px;font-size:21.4px;line-height:21.4px;color:#000;-webkit-text-stroke:0.2px #000;transform:scaleX(1.1042);">Thompson G.</span>
<span class="t" style="left:419.19px;top:388.51px;font-size:21.4px;line-height:21.4px;color:#000;-webkit-text-stroke:0.2px #000;transform:scaleX(1.1511);">26</span>
<span class="t" style="left:550.26px;top:388.51px;font-size:21.4px;line-height:21.4px;color:#000;-webkit-text-stroke:0.2px #000;transform:scaleX(1.0586);">Business</span>
<span class="t" style="left:64.00px;top:422.51px;font-size:21.4px;line-height:21.4px;color:#000;-webkit-text-stroke:0.2px #000;transform:scaleX(1.0467);">ST348-248</span>
<span class="t" style="left:226.18px;top:422.51px;font-size:21.4px;line-height:21.4px;color:#000;-webkit-text-stroke:0.2px #000;transform:scaleX(1.0866);">James M.</span>
<span class="t" style="left:419.21px;top:422.51px;font-size:21.4px;line-height:21.4px;color:#000;-webkit-text-stroke:0.2px #000;transform:scaleX(1.1324);">23</span>
<span class="t" style="left:555.09px;top:422.51px;font-size:21.4px;line-height:21.4px;color:#000;-webkit-text-stroke:0.2px #000;transform:scaleX(1.1279);">Nursing</span>
<span class="t" style="left:64.00px;top:456.51px;font-size:21.4px;line-height:21.4px;color:#000;-webkit-text-stroke:0.2px #000;transform:scaleX(1.0506);">ST348-249</span>
<span class="t" style="left:215.02px;top:456.51px;font-size:21.4px;line-height:21.4px;color:#000;-webkit-text-stroke:0.2px #000;transform:scaleX(1.0989);">Peterson A.</span>
<span class="t" style="left:419.58px;top:456.51px;font-size:21.4px;line-height:21.4px;color:#000;-webkit-text-stroke:0.2px #000;transform:scaleX(1.1338);">37</span>
<span class="t" style="left:555.88px;top:456.51px;font-size:21.4px;line-height:21.4px;color:#000;-webkit-text-stroke:0.2px #000;transform:scaleX(1.0615);">Science</span>
<span class="t" style="left:64.00px;top:490.51px;font-size:21.4px;line-height:21.4px;color:#000;-webkit-text-stroke:0.2px #000;transform:scaleX(1.0472);">ST348-250</span>
<span class="t" style="left:221.14px;top:490.51px;font-size:21.4px;line-height:21.4px;color:#000;-webkit-text-stroke:0.2px #000;transform:scaleX(1.0681);">Graham S.</span>
<span class="t" style="left:420.11px;top:490.51px;font-size:21.4px;line-height:21.4px;color:#000;-webkit-text-stroke:0.2px #000;transform:scaleX(1.0928);">18</span>
<span class="t" style="left:574.61px;top:490.51px;font-size:21.4px;line-height:21.4px;color:#000;-webkit-text-stroke:0.2px #000;transform:scaleX(1.1410);">Arts</span>
<span class="t" style="left:64.00px;top:524.51px;font-size:21.4px;line-height:21.4px;color:#000;-webkit-text-stroke:0.2px #000;transform:scaleX(1.0467);">ST348-251</span>
<span class="t" style="left:234.05px;top:524.51px;font-size:21.4px;line-height:21.4px;color:#000;-webkit-text-stroke:0.2px #000;transform:scaleX(1.0956);">Smith F.</span>
<span class="t" style="left:419.19px;top:524.51px;font-size:21.4px;line-height:21.4px;color:#000;-webkit-text-stroke:0.2px #000;transform:scaleX(1.1511);">26</span>
<span class="t" style="left:550.26px;top:524.51px;font-size:21.4px;line-height:21.4px;color:#000;-webkit-text-stroke:0.2px #000;transform:scaleX(1.0586);">Business</span>
<span class="t" style="left:64.00px;top:558.51px;font-size:21.4px;line-height:21.4px;color:#000;-webkit-text-stroke:0.2px #000;transform:scaleX(1.0467);">ST348-252</span>
<span class="t" style="left:237.09px;top:558.51px;font-size:21.4px;line-height:21.4px;color:#000;-webkit-text-stroke:0.2px #000;transform:scaleX(1.0342);">Nash S.</span>
<span class="t" style="left:419.21px;top:558.51px;font-size:21.4px;line-height:21.4px;color:#000;-webkit-text-stroke:0.2px #000;transform:scaleX(1.1324);">22</span>
<span class="t" style="left:574.61px;top:558.51px;font-size:21.4px;line-height:21.4px;color:#000;-webkit-text-stroke:0.2px #000;transform:scaleX(1.1410);">Arts</span>
<span class="t" style="left:64.00px;top:592.51px;font-size:21.4px;line-height:21.4px;color:#000;-webkit-text-stroke:0.2px #000;transform:scaleX(1.0467);">ST348-253</span>
<span class="t" style="left:222.63px;top:592.51px;font-size:21.4px;line-height:21.4px;color:#000;-webkit-text-stroke:0.2px #000;transform:scaleX(1.0651);">Russell W.</span>
<span class="t" style="left:419.20px;top:592.51px;font-size:21.4px;line-height:21.4px;color:#000;-webkit-text-stroke:0.2px #000;transform:scaleX(1.1338);">20</span>
<span class="t" style="left:555.09px;top:592.51px;font-size:21.4px;line-height:21.4px;color:#000;-webkit-text-stroke:0.2px #000;transform:scaleX(1.1279);">Nursing</span>
<span class="t" style="left:64.00px;top:626.51px;font-size:21.4px;line-height:21.4px;color:#000;-webkit-text-stroke:0.2px #000;transform:scaleX(1.0511);">ST348-254</span>
<span class="t" style="left:214.45px;top:626.51px;font-size:21.4px;line-height:21.4px;color:#000;-webkit-text-stroke:0.2px #000;transform:scaleX(1.1092);">Robitaille L.</span>
<span class="t" style="left:420.09px;top:626.51px;font-size:21.4px;line-height:21.4px;color:#000;-webkit-text-stroke:0.2px #000;transform:scaleX(1.1118);">19</span>
<span class="t" style="left:553.21px;top:626.51px;font-size:21.4px;line-height:21.4px;color:#000;-webkit-text-stroke:0.2px #000;transform:scaleX(1.1598);">Drafting</span>
<div style="left:1340px;top:243px;width:1px;height:425px;background:#9a9a9a"></div>
<div style="left:0px;top:667px;width:1341px;height:1px;background:#9f9f9f"></div>
<div style="left:0px;top:668px;width:1366px;height:29px;background:#e6e6e6"></div>
<div style="left:1342px;top:481px;width:22px;height:168px;background:#d9d9d9"></div>
<div style="left:1344px;top:212.5px;width:18.5px;height:18.5px;background:#fff;border:1px solid #c2c2c2"></div>
<svg style="left:1348.5px;top:218.5px" width="10" height="6" viewBox="0 0 10 6"><path d="M0 6L5 0.5L10 6Z" fill="#777"/></svg>
<div style="left:1344px;top:231.5px;width:18.5px;height:249px;background:#fff;border:1px solid #999"></div>
<div style="left:1344px;top:649px;width:18.5px;height:18.5px;background:#fff;border:1px solid #c2c2c2"></div>
<svg style="left:1348.5px;top:655.5px" width="10" height="6" viewBox="0 0 10 6"><path d="M0 0L5 5.5L10 0Z" fill="#777"/></svg>
<svg style="left:27.5px;top:676px" width="7" height="11" viewBox="0 0 7 11"><path d="M6.3 0.8V10.2L0.7 5.5Z" fill="#c9c9c9"/></svg>
<svg style="left:57px;top:676.5px" width="6" height="10" viewBox="0 0 6 10"><path d="M0.3 0.3V9.7L5.4 5Z" fill="#1d6a40"/></svg>
<span class="t" style="left:115.68px;top:670.14px;font-size:16.3px;line-height:16.3px;color:#555;transform:scaleX(1.0140);">Sheet1</span>
<span class="t" style="left:194.68px;top:670.14px;font-size:16.3px;line-height:16.3px;color:#555;transform:scaleX(1.0140);">Sheet2</span>
<span class="t" style="left:273.68px;top:670.14px;font-size:16.3px;line-height:16.3px;color:#555;transform:scaleX(1.0140);">Sheet3</span>
<span class="t" style="left:352.69px;top:670.14px;font-size:16.3px;line-height:16.3px;color:#555;transform:scaleX(1.0089);">Sheet4</span>
<span class="t" style="left:431.68px;top:670.14px;font-size:16.3px;line-height:16.3px;color:#555;transform:scaleX(1.0140);">Sheet5</span>
<span class="t" style="left:510.68px;top:670.14px;font-size:16.3px;line-height:16.3px;color:#555;transform:scaleX(1.0140);">Sheet6</span>
<div style="left:577.5px;top:667.5px;width:79.5px;height:25px;background:#fff;border-left:1px solid #bdbdbd;border-right:1px solid #bdbdbd;border-bottom:2px solid #217346"></div>
<span class="t" style="left:589.17px;top:670.14px;font-size:16.3px;line-height:16.3px;color:#217346;-webkit-text-stroke:0.65px #217346;transform:scaleX(1.0437);">Sheet7</span>
<span class="t" style="left:668.68px;top:670.14px;font-size:16.3px;line-height:16.3px;color:#555;transform:scaleX(1.0140);">Sheet8</span>
<div style="left:103px;top:671px;width:1px;height:20.5px;background:#a6a6a6"></div>
<div style="left:182px;top:671px;width:1px;height:20.5px;background:#a6a6a6"></div>
<div style="left:261px;top:671px;width:1px;height:20.5px;background:#a6a6a6"></div>
<div style="left:340px;top:671px;width:1px;height:20.5px;background:#a6a6a6"></div>
<div style="left:419px;top:671px;width:1px;height:20.5px;background:#a6a6a6"></div>
<div style="left:498px;top:671px;width:1px;height:20.5px;background:#a6a6a6"></div>
<div style="left:735px;top:671px;width:1px;height:20.5px;background:#a6a6a6"></div>
<span class="t" style="left:751.72px;top:667.85px;font-size:19px;line-height:19px;color:#17603a;-webkit-text-stroke:0.2px #17603a;transform:scaleX(0.9972);">...</span>
<svg style="left:778.5px;top:671px" width="21" height="21" viewBox="0 0 21 21"><circle cx="10.5" cy="10.5" r="9.6" fill="none" stroke="#777" stroke-width="1.3"/><path d="M10.5 5.6V15.4M5.6 10.5H15.4" stroke="#6f6f6f" stroke-width="2"/></svg>
<div style="left:817px;top:675px;width:3px;height:3px;background:#b9b9b9"></div>
<div style="left:817px;top:680px;width:3px;height:3px;background:#b9b9b9"></div>
<div style="left:817px;top:685px;width:3px;height:3px;background:#b9b9b9"></div>
<div style="left:835px;top:672.5px;width:19px;height:18px;background:#fff;border:1px solid #c2c2c2"></div>
<svg style="left:840.5px;top:676.5px" width="6" height="10" viewBox="0 0 6 10"><path d="M5.6 0.2V9.8L0.5 5Z" fill="#777"/></svg>
<div style="left:854px;top:672.5px;width:469px;height:18px;background:#d9d9d9"></div>
<div style="left:854px;top:672.5px;width:373.5px;height:18px;background:#f1f1f1;border:1px solid #a5a5a5"></div>
<div style="left:1324px;top:672.5px;width:18.5px;height:18px;background:#fff;border:1px solid #c2c2c2"></div>
<svg style="left:1330.5px;top:676.5px" width="6" height="10" viewBox="0 0 6 10"><path d="M0 0V10L5.5 5Z" fill="#777"/></svg>
<div style="left:0px;top:696px;width:1366px;height:26px;background:#f3f2f1"></div>
<div style="left:1030px;top:696px;width:42px;height:26px;background:#c8c8c8"></div>
<svg style="left:1043px;top:701.5px" width="16.5" height="16.5" viewBox="0 0 16.5 16.5"><path d="M0.6 0.6H15.9V15.9H0.6ZM0.6 5.7H15.9M0.6 10.8H15.9M5.7 0.6V15.9M10.8 0.6V15.9" fill="none" stroke="#6a6a6a" stroke-width="1.2"/></svg>
<svg style="left:1084px;top:701.5px" width="17" height="16.5" viewBox="0 0 17 16.5"><path d="M0.6 0.6H16.4V15.9H0.6Z" fill="none" stroke="#6a6a6a" stroke-width="1.2"/><path d="M4.6 3.8H12.4V12.7H4.6ZM6.3 6.3H10.7M6.3 8.3H10.7M6.3 10.3H10.7" fill="none" stroke="#6a6a6a" stroke-width="1"/></svg>
<svg style="left:1126px;top:701.5px" width="17" height="16.5" viewBox="0 0 17 16.5"><path d="M0.6 0.6H16.4V15.9H0.6ZM0.6 8.6H9.5V0.6M4.6 0.6V8.6" fill="none" stroke="#6a6a6a" stroke-width="1.2"/></svg>
<div style="left:1161px;top:708.5px;width:10px;height:2.4px;background:#6a6a6a"></div>
<div style="left:1175px;top:709.6px;width:124px;height:1px;background:#a8a8a8"></div>
<div style="left:1236.5px;top:705px;width:1px;height:10px;background:#a8a8a8"></div>
<div style="left:1242.8px;top:703px;width:5.8px;height:14.3px;background:#6e6e6e"></div>
<div style="left:1303.5px;top:708.5px;width:10.5px;height:2.4px;background:#6a6a6a"></div>
<div style="left:1307.6px;top:704.4px;width:2.4px;height:10.5px;background:#6a6a6a"></div>
<span class="t" style="left:1326.24px;top:703.95px;font-size:13px;line-height:13px;color:#555;transform:scaleX(0.9361);">140%</span>
</body></html>
